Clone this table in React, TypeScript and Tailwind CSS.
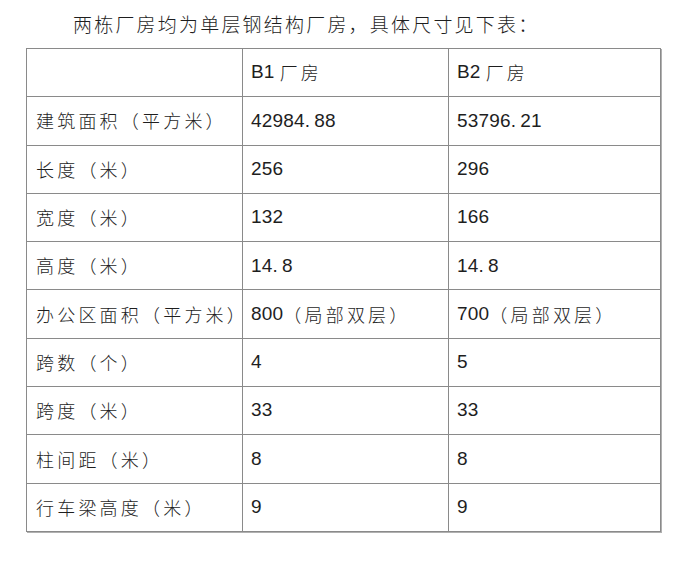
import React from "react";

const rows: [string, string, string][] = [
  ["", "B1 厂房", "B2 厂房"],
  ["建筑面积（平方米）", "42984.88", "53796.21"],
  ["长度（米）", "256", "296"],
  ["宽度（米）", "132", "166"],
  ["高度（米）", "14.8", "14.8"],
  ["办公区面积（平方米）", "800（局部双层）", "700（局部双层）"],
  ["跨数（个）", "4", "5"],
  ["跨度（米）", "33", "33"],
  ["柱间距（米）", "8", "8"],
  ["行车梁高度（米）", "9", "9"],
];

function Latin({ text }: { text: string }) {
  const idx = text.indexOf(".");
  if (idx < 0) return <>{text}</>;
  return (
    <>
      {text.slice(0, idx)}
      <span className="mr-[4px]">.</span>
      {text.slice(idx + 1)}
    </>
  );
}

function Cell({ text, first }: { text: string; first: boolean }) {
  const parts = text.match(/[A-Za-z0-9.]+|[^A-Za-z0-9.]+/g) || [];
  return (
    <div
      className={`flex items-center border-r border-b border-[#8a8a8a] ${first ? "pl-[9px]" : "pl-[8px]"} text-[#1e1e1e] whitespace-nowrap`}
    >
      {parts.map((p, i) =>
        /[A-Za-z0-9.]/.test(p) ? (
          <span
            key={i}
            className="shrink-0 text-[19px] tracking-[0.2px] [font-family:'Liberation_Sans','Noto_Sans_CJK_SC',sans-serif]"
          >
            <Latin text={p} />
          </span>
        ) : (
          <span
            key={i}
            className={`shrink-0 text-[18px] tracking-[3.2px] [font-family:'Noto_Sans_CJK_SC',sans-serif] font-light ${p.startsWith(" ") ? "ml-[5px]" : ""}`}
          >
            {p.trim()}
          </span>
        )
      )}
    </div>
  );
}

export default function App() {
  return (
    <div className="w-[700px] h-[561px] bg-white overflow-hidden">
      <div className="h-[48px] flex items-center pl-[73px] text-[19px] tracking-[2.2px] text-[#1e1e1e] [font-family:'Noto_Sans_CJK_SC',sans-serif] font-light">
        两栋厂房均为单层钢结构厂房，具体尺寸见下表：
      </div>
      <div className="ml-[26px] w-[635px] grid grid-cols-[216px_206px_212px] auto-rows-[48.3px] border-l border-t border-[#8a8a8a] shadow-[1px_1px_0_#b0b0b0]">
        {rows.map((r, ri) =>
          r.map((c, ci) => <Cell key={`${ri}-${ci}`} text={c} first={ci === 0} />)
        )}
      </div>
    </div>
  );
}
